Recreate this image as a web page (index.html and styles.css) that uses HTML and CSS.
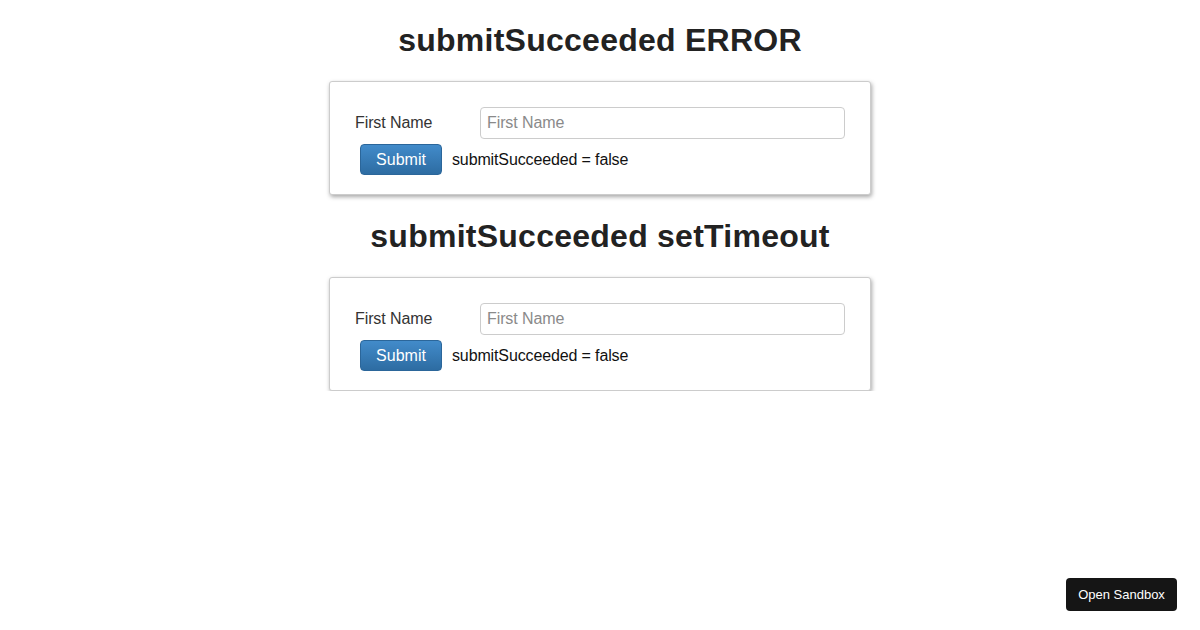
FILE: index.html
```html
<!DOCTYPE html>
<html>
<head>
<meta charset="utf-8">
<link rel="stylesheet" href="styles.css">
</head>
<body>
<div class="page">
  <h2 class="title first">submitSucceeded ERROR</h2>
  <div class="card">
    <div class="row">
      <label class="label">First Name</label>
      <input class="input" type="text" placeholder="First Name">
    </div>
    <div class="actions">
      <button class="btn">Submit</button>
      <span class="status">submitSucceeded = false</span>
    </div>
  </div>
  <h2 class="title">submitSucceeded setTimeout</h2>
  <div class="card">
    <div class="row">
      <label class="label">First Name</label>
      <input class="input" type="text" placeholder="First Name">
    </div>
    <div class="actions">
      <button class="btn">Submit</button>
      <span class="status">submitSucceeded = false</span>
    </div>
  </div>
</div>
<a class="sandbox">Open Sandbox</a>
</body>
</html>
```
FILE: styles.css
```css
html, body {
  margin: 0;
  padding: 0;
  background: #fff;
}
body {
  font-family: "Liberation Sans", Arial, sans-serif;
  color: #333;
  font-size: 16px;
}
.page {
  width: 542px;
  margin: 0 auto;
  display: flex;
  flex-direction: column;
}
.title {
  margin: 24px 0 23px;
  height: 35px;
  font-size: 32px;
  line-height: 35px;
  font-weight: bold;
  text-align: center;
  color: #222;
  letter-spacing: 0.25px;
}
.title.first {
  margin-top: 23px;
}
.card {
  box-sizing: border-box;
  height: 114px;
  border: 1px solid #ccc;
  border-radius: 3px;
  box-shadow: 1px 2px 4px rgba(0, 0, 0, 0.35);
  padding: 25px 25px 0;
  display: flex;
  flex-direction: column;
  gap: 5px;
  background: #fff;
}
.row {
  display: flex;
  align-items: center;
  height: 32px;
}
.label {
  width: 125px;
  flex: none;
  font-size: 16px;
  color: #333;
  letter-spacing: -0.1px;
}
.input {
  flex: 1;
  box-sizing: border-box;
  height: 32px;
  border: 1px solid #ccc;
  border-radius: 4px;
  padding: 0 6px;
  font-family: "Liberation Sans", Arial, sans-serif;
  font-size: 16px;
  color: #555;
  margin: 0;
  letter-spacing: -0.1px;
}
.input::placeholder {
  color: #8a8a8a;
}
.actions {
  display: flex;
  align-items: center;
  padding-left: 5px;
}
.btn {
  box-sizing: border-box;
  width: 82px;
  height: 31px;
  border: 1px solid #2b669a;
  border-radius: 4px;
  background: linear-gradient(to bottom, #428bca 0%, #2d6ca2 100%);
  color: #fff;
  font-family: "Liberation Sans", Arial, sans-serif;
  font-size: 16px;
  padding: 0;
  margin: 0;
}
.status {
  margin-left: 10px;
  color: #111;
  font-size: 16px;
  letter-spacing: -0.13px;
}
.sandbox {
  position: fixed;
  right: 23px;
  bottom: 19px;
  width: 111px;
  height: 33px;
  box-sizing: border-box;
  background: #151515;
  color: #fff;
  border-radius: 4px;
  font-size: 13px;
  display: flex;
  align-items: center;
  justify-content: center;
}
```
